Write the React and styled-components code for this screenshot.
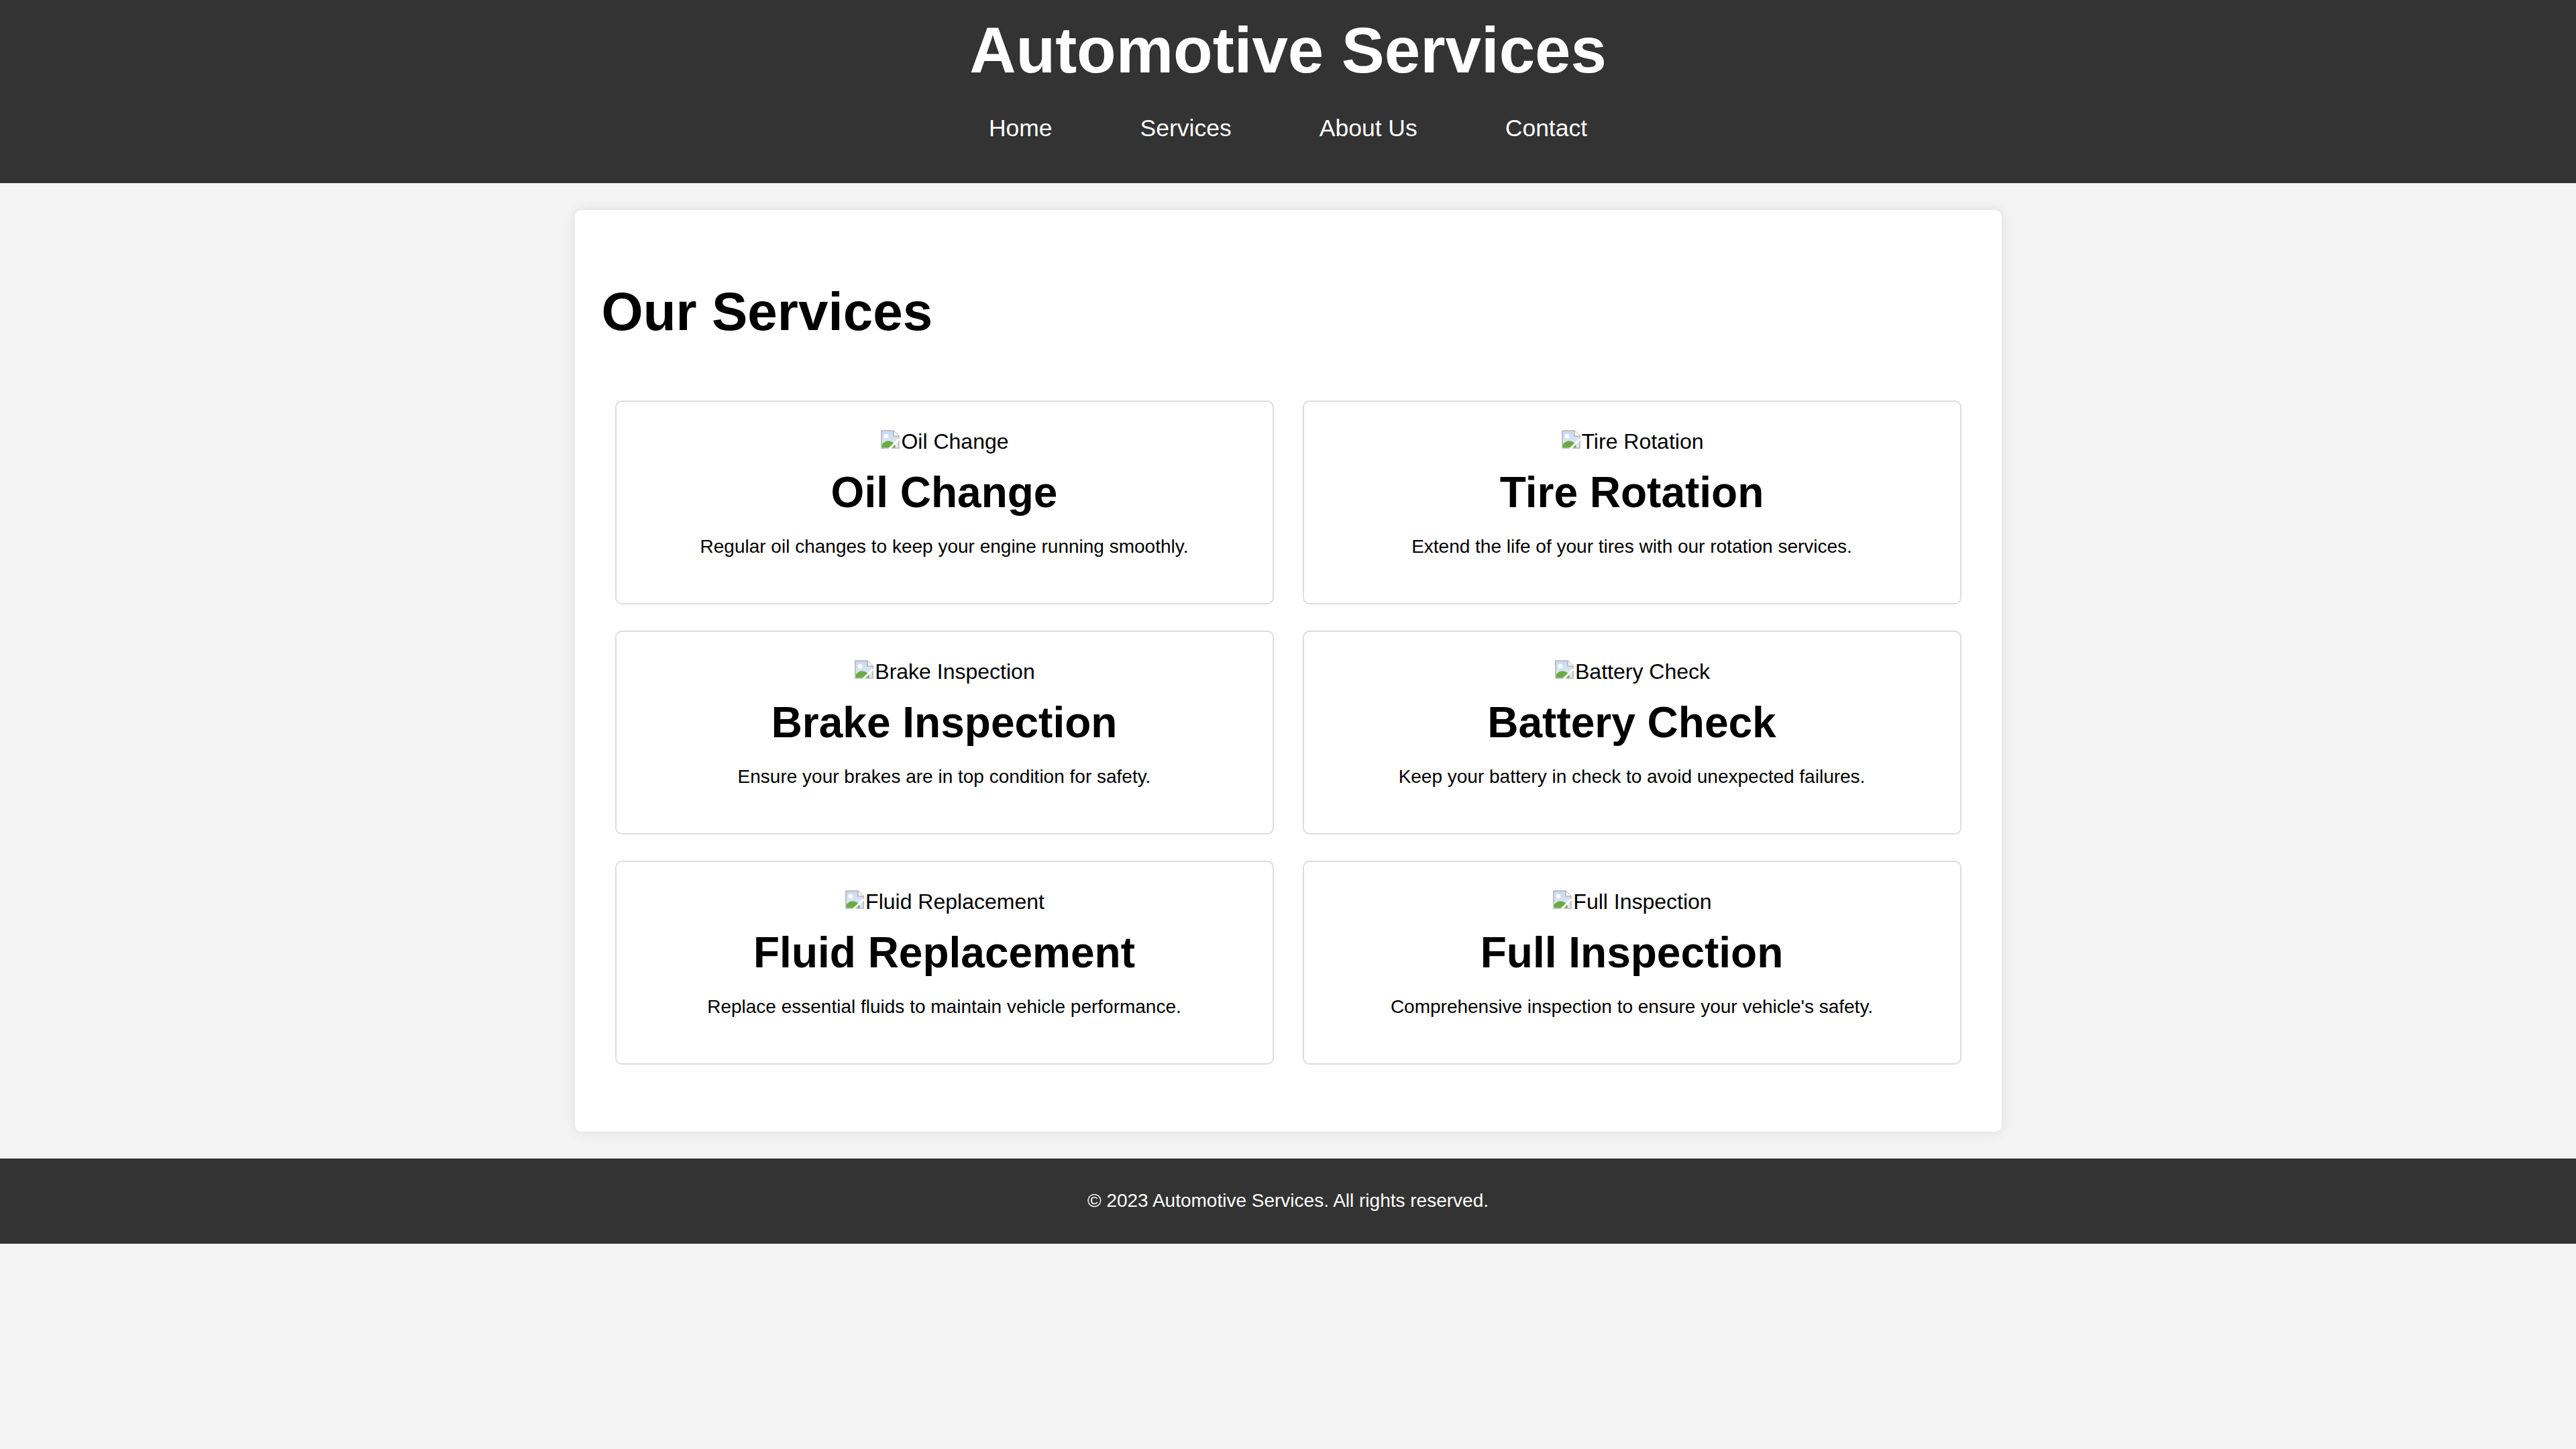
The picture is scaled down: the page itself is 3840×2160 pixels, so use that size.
import React from "react";
import styled, { createGlobalStyle } from "styled-components";

const GlobalStyle = createGlobalStyle`
  html, body {
    margin: 0;
    padding: 0;
    background: #f4f4f4;
  }
  body {
    font-family: "Liberation Sans", Arial, Helvetica, sans-serif;
    font-size: 32px;
    color: #000;
  }
  * { box-sizing: border-box; }
`;

const Header = styled.header`
  background: #333333;
  color: #ffffff;
  text-align: center;
  padding: 20px 0 21px;
`;

const Title = styled.h1`
  margin: 0 0 41px;
  font-size: 96px;
  font-weight: bold;
  line-height: normal;
`;

const Nav = styled.nav`
  display: flex;
  justify-content: center;
  gap: 131px;
  margin-bottom: 40px;
`;

const NavLink = styled.a`
  color: #ffffff;
  text-decoration: none;
  font-size: 35.5px;
  line-height: normal;
`;

const Main = styled.main`
  width: 2127px;
  margin: 40px auto;
  background: #ffffff;
  border-radius: 10px;
  box-shadow: 0 0 20px rgba(0, 0, 0, 0.1);
  padding: 40px 40px 80px;
`;

const SectionTitle = styled.h2`
  margin: 66px 0 66px;
  font-size: 80px;
  font-weight: bold;
  line-height: normal;
`;

const Grid = styled.div`
  display: grid;
  grid-template-columns: 1fr 1fr;
  column-gap: 43px;
  row-gap: 39px;
  padding: 20px;
`;

const Card = styled.div`
  background: #ffffff;
  border: 2px solid #dddddd;
  border-radius: 10px;
  padding: 40px;
  text-align: center;
`;

const ImgAlt = styled.div`
  font-size: 32px;
  line-height: normal;
`;

const BrokenIcon = styled.svg`
  width: 32px;
  height: 32px;
  vertical-align: -2px;
`;

const CardTitle = styled.h3`
  margin: 20px 0;
  font-size: 64px;
  font-weight: bold;
  line-height: normal;
`;

const CardText = styled.p`
  margin: 28px 0;
  font-size: 28px;
  line-height: normal;
`;

const Footer = styled.footer`
  background: #333333;
  color: #ffffff;
  text-align: center;
  padding: 47px 0 48px;
  font-size: 28px;
  line-height: normal;
`;

const Broken = () => (
  <BrokenIcon viewBox="0 0 16 16" aria-hidden="true">
    <defs>
      <linearGradient id="sky" x1="0" y1="0" x2="0" y2="1">
        <stop offset="0" stopColor="#c7d9f2" />
        <stop offset="1" stopColor="#e4ecf7" />
      </linearGradient>
    </defs>
    <path d="M1.5 1.5 H10.5 L14.5 5.5 V14.5 H1.5 Z" fill="url(#sky)" stroke="#b4b4b4" strokeWidth="0.8" />
    <path d="M10.5 1.5 V5.5 H14.5" fill="#ffffff" stroke="#b4b4b4" strokeWidth="0.8" />
    <circle cx="5" cy="5.6" r="1.7" fill="#ffffff" />
    <path d="M1.9 14.1 V11.8 Q4.5 8.4 8.2 9.4 Q10.6 10.2 11.8 12.4 V14.1 Z" fill="#6aab43" />
    <path d="M7.2 15.2 L14.8 7.6" stroke="#ffffff" strokeWidth="1.5" />
  </BrokenIcon>
);

const services = [
  { title: "Oil Change", text: "Regular oil changes to keep your engine running smoothly." },
  { title: "Tire Rotation", text: "Extend the life of your tires with our rotation services." },
  { title: "Brake Inspection", text: "Ensure your brakes are in top condition for safety." },
  { title: "Battery Check", text: "Keep your battery in check to avoid unexpected failures." },
  { title: "Fluid Replacement", text: "Replace essential fluids to maintain vehicle performance." },
  { title: "Full Inspection", text: "Comprehensive inspection to ensure your vehicle's safety." },
];

export default function App() {
  return (
    <>
      <GlobalStyle />
      <Header>
        <Title>Automotive Services</Title>
        <Nav>
          <NavLink href="#">Home</NavLink>
          <NavLink href="#">Services</NavLink>
          <NavLink href="#">About Us</NavLink>
          <NavLink href="#">Contact</NavLink>
        </Nav>
      </Header>
      <Main>
        <SectionTitle>Our Services</SectionTitle>
        <Grid>
          {services.map((s) => (
            <Card key={s.title}>
              <ImgAlt>
                <Broken />
                {s.title}
              </ImgAlt>
              <CardTitle>{s.title}</CardTitle>
              <CardText>{s.text}</CardText>
            </Card>
          ))}
        </Grid>
      </Main>
      <Footer>© 2023 Automotive Services. All rights reserved.</Footer>
    </>
  );
}
